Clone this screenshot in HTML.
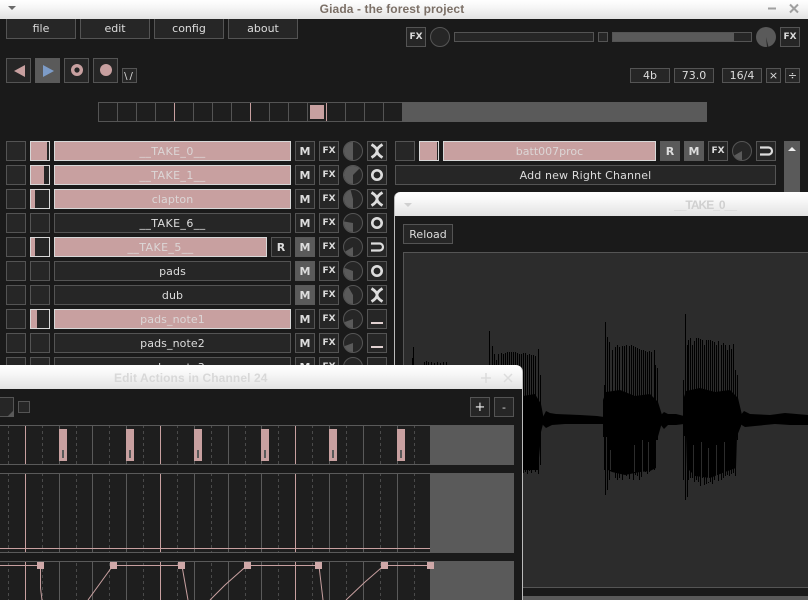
<!DOCTYPE html>
<html lang="en"><head><meta charset="utf-8"><title>Giada - the forest project</title>
<style>
html{margin:0;padding:0;background:#1a1a1a;width:808px;height:600px;overflow:hidden}
body{margin:0;padding:0;background:#1a1a1a;position:relative;width:808px;height:600px;overflow:hidden;font:11px "DejaVu Sans","Liberation Sans",sans-serif;color:#ddd}
div,svg{position:absolute;box-sizing:border-box}
.b{border:1px solid #545454;background:#262626;text-align:center;height:20px;line-height:19px;white-space:nowrap;overflow:hidden}
.r{left:0;width:808px;height:20px}
.c1{left:6px;width:20px}.c2{left:30px;width:20px}.n{left:54px;width:237px;letter-spacing:.1px}
.t{letter-spacing:.4px}
.m{left:295px;width:20px;font-weight:bold;font-size:11px}.fx{left:319px;width:20px;font-weight:bold;font-size:9px}
.k{left:343px;top:0;width:20px;height:20px}.md{left:367px;width:20px}
.md svg{left:0;top:0}
.p{background:#c8a0a0;border-color:#d8d8d8;color:#dcd6d6}
.on{background:#5a5a5a;border-color:#5a5a5a}
.f{left:0;top:0}
.dk{background:#262626;top:0;bottom:0;right:0}
.tb{background:linear-gradient(#fff 0,#f6f6f6 40%,#e2e2e2 100%)}
.ttl{font:bold 12px "Liberation Sans",sans-serif;text-align:center;white-space:nowrap;letter-spacing:.1px}
circle.kc{fill:#262626;stroke:#555}
path.w{fill:#5a5a5a}
</style></head><body>

<svg width="0" height="0" style="left:0;top:0"><defs>
<path id="ix" d="M4.500 3.500Q15.500 10 4.500 16.500M15.500 3.500Q4.500 10 15.500 16.500" fill="none" stroke="#ddd" stroke-width="2.800"/>
<circle id="io" cx="10" cy="10" r="4.700" fill="none" stroke="#ddd" stroke-width="2.600"/>
<path id="iu" d="M4 6.500H12.500A3.500 3.500 0 0 1 12.500 13.500H4" fill="none" stroke="#ddd" stroke-width="2.200"/>
<rect id="il" x="4" y="13" width="12" height="2" fill="#e0d0d0"/>
</defs></svg>

<!-- menu -->
<div class="b" style="left:6px;top:10px;width:70px;height:29px;padding-top:9px;line-height:18px">file</div>
<div class="b" style="left:80px;top:10px;width:70px;height:29px;padding-top:9px;line-height:18px">edit</div>
<div class="b" style="left:154px;top:10px;width:70px;height:29px;padding-top:9px;line-height:18px">config</div>
<div class="b" style="left:228px;top:10px;width:70px;height:29px;padding-top:9px;line-height:18px">about</div>

<!-- main title -->
<div class="tb" style="left:0;top:0;width:808px;height:19px"></div>
<div class="ttl" style="left:0;top:1px;width:784px;color:#7b6f66;line-height:16px">Giada - the forest project</div>
<svg class="f" width="808" height="19"><path d="M8 6H16L12 10Z" fill="#6a6a6a"/><path d="M768 8.500H776" stroke="#a0a0a0" stroke-width="2"/><path d="M790 4.500L798 12.500M798 4.500L790 12.500" stroke="#a0a0a0" stroke-width="2"/></svg>

<!-- transport -->
<div class="b" style="left:6px;top:58px;width:25px;height:25px"></div>
<div class="b on" style="left:35px;top:58px;width:25px;height:25px"></div>
<div class="b" style="left:64px;top:58px;width:25px;height:25px"></div>
<div class="b" style="left:93px;top:58px;width:25px;height:25px"></div>
<div class="b" style="left:122px;top:68px;width:15px;height:15px;line-height:15px;font-size:10px;letter-spacing:2px">\/</div>
<svg class="f" width="130" height="90"><path d="M25 65V77L14 71Z" fill="#c8a0a0"/><path d="M43 65V77L54 71Z" fill="#7d9cc8"/><circle cx="77" cy="70" r="4.300" fill="none" stroke="#c8a0a0" stroke-width="3.400"/><circle cx="106" cy="70" r="6" fill="#c8a0a0"/></svg>

<!-- beat meter -->
<svg class="f" width="808" height="130">
<path d="M98.500 102.500H402.500V121.500H98.500ZM117.500 102V122M136.500 102V122M155.500 102V122M193.500 102V122M212.500 102V122M231.500 102V122M269.500 102V122M288.500 102V122M307.500 102V122M345.500 102V122M364.500 102V122M383.500 102V122" fill="#1e1e1e" stroke="#545454"/>
<path d="M174.500 103V121M250.500 103V121M326.500 103V121" stroke="#c8a0a0"/>
<rect x="310" y="105" width="14" height="14" fill="#c8a0a0"/>
<rect x="402" y="102" width="305" height="20" fill="#5a5a5a"/>
</svg>

<!-- master -->
<div class="b" style="left:406px;top:27px;width:20px;font-weight:bold;font-size:9px">FX</div>
<svg style="left:430px;top:27px" width="20" height="20"><circle class="kc" cx="10" cy="10" r="9.500"/></svg>
<div class="b" style="left:454px;top:32px;width:140px;height:10px"></div>
<div class="b" style="left:598px;top:32px;width:10px;height:10px"></div>
<div class="b" style="left:612px;top:32px;width:140px;height:10px"><div style="left:0;top:0;bottom:0;width:121px;background:#5a5a5a"></div></div>
<svg style="left:756px;top:27px" width="20" height="20"><circle cx="10" cy="10" r="10" fill="#5a5a5a"/><path d="M10 10L11 20H12.500Z" fill="#262626"/></svg>
<div class="b" style="left:780px;top:27px;width:20px;font-weight:bold;font-size:9px">FX</div>

<div class="b" style="left:630px;top:68px;width:40px;height:15px;line-height:14px">4b</div>
<div class="b" style="left:674px;top:68px;width:40px;height:15px;line-height:14px">73.0</div>
<div class="b" style="left:722px;top:68px;width:40px;height:15px;line-height:14px">16/4</div>
<div class="b" style="left:766px;top:68px;width:15px;height:15px;line-height:13px">×</div>
<div class="b" style="left:785px;top:68px;width:15px;height:15px;line-height:13px">÷</div>

<!-- left channels -->
<div class="r" style="top:141px"><div class="b c1"></div><div class="b c2 p"><div class="dk" style="width:2px"></div></div><div class="b n p t">__TAKE_0__</div><div class="b m">M</div><div class="b fx">FX</div>
<svg class="k" style="left:343px"><circle class="kc" cx="10" cy="10" r="9.500"/><path class="w" d="M10 10V19A9 9 0 0 1 10 1Z"/></svg><div class="b md"><svg width="18" height="18" viewBox="1 1 18 18"><use href="#ix"/></svg></div></div>

<div class="r" style="top:165px"><div class="b c1"></div><div class="b c2 p"><div class="dk" style="width:5px"></div></div><div class="b n p t">__TAKE_1__</div><div class="b m">M</div><div class="b fx">FX</div>
<svg class="k" style="left:343px"><circle class="kc" cx="10" cy="10" r="9.500"/><path class="w" d="M10 10V19A9 9 0 1 1 16.360 3.640Z"/></svg><div class="b md"><svg width="18" height="18" viewBox="1 1 18 18"><use href="#io"/></svg></div></div>

<div class="r" style="top:189px"><div class="b c1"></div><div class="b c2 p"><div class="dk" style="left:4px"></div></div><div class="b n p">clapton</div><div class="b m">M</div><div class="b fx">FX</div>
<svg class="k" style="left:343px"><circle class="kc" cx="10" cy="10" r="9.500"/><path class="w" d="M10 10V19A9 9 0 0 1 7.670 1.310Z"/></svg><div class="b md"><svg width="18" height="18" viewBox="1 1 18 18"><use href="#ix"/></svg></div></div>

<div class="r" style="top:213px"><div class="b c1"></div><div class="b c2"></div><div class="b n t">__TAKE_6__</div><div class="b m">M</div><div class="b fx">FX</div>
<svg class="k" style="left:343px"><circle class="kc" cx="10" cy="10" r="9.500"/><path class="w" d="M10 10V19A9 9 0 0 1 1.140 8.440Z"/></svg><div class="b md"><svg width="18" height="18" viewBox="1 1 18 18"><use href="#io"/></svg></div></div>

<div class="r" style="top:237px"><div class="b c1"></div><div class="b c2 p"><div class="dk" style="left:4px"></div></div><div class="b n p t" style="width:213px">__TAKE_5__</div><div class="b m" style="left:271px">R</div><div class="b m on">M</div><div class="b fx">FX</div>
<svg class="k" style="left:343px"><circle class="kc" cx="10" cy="10" r="9.500"/><path class="w" d="M10 10V19A9 9 0 0 1 2.210 14.500Z"/></svg><div class="b md"><svg width="18" height="18" viewBox="1 1 18 18"><use href="#iu"/></svg></div></div>

<div class="r" style="top:261px"><div class="b c1"></div><div class="b c2"></div><div class="b n">pads</div><div class="b m on">M</div><div class="b fx">FX</div>
<svg class="k" style="left:343px"><circle class="kc" cx="10" cy="10" r="9.500"/><path class="w" d="M10 10V19A9 9 0 0 1 1.540 6.920Z"/></svg><div class="b md"><svg width="18" height="18" viewBox="1 1 18 18"><use href="#io"/></svg></div></div>

<div class="r" style="top:285px"><div class="b c1"></div><div class="b c2"></div><div class="b n">dub</div><div class="b m on">M</div><div class="b fx">FX</div>
<svg class="k" style="left:343px"><circle class="kc" cx="10" cy="10" r="9.500"/><path class="w" d="M10 10V19A9 9 0 0 1 5.500 2.210Z"/></svg><div class="b md"><svg width="18" height="18" viewBox="1 1 18 18"><use href="#ix"/></svg></div></div>

<div class="r" style="top:309px"><div class="b c1"></div><div class="b c2 p"><div class="dk" style="left:6px"></div></div><div class="b n p">pads_note1</div><div class="b m">M</div><div class="b fx">FX</div>
<svg class="k" style="left:343px"><circle class="kc" cx="10" cy="10" r="9.500"/><path class="w" d="M10 10V19A9 9 0 0 1 1.540 13.080Z"/></svg><div class="b md"><svg width="18" height="18" viewBox="1 1 18 18"><use href="#il"/></svg></div></div>

<div class="r" style="top:333px"><div class="b c1"></div><div class="b c2"></div><div class="b n">pads_note2</div><div class="b m">M</div><div class="b fx">FX</div>
<svg class="k" style="left:343px"><circle class="kc" cx="10" cy="10" r="9.500"/><path class="w" d="M10 10V19A9 9 0 0 1 1.540 13.080Z"/></svg><div class="b md"><svg width="18" height="18" viewBox="1 1 18 18"><use href="#il"/></svg></div></div>

<div class="r" style="top:357px"><div class="b c1"></div><div class="b c2"></div><div class="b n">pads_note3</div><div class="b m">M</div><div class="b fx">FX</div>
<svg class="k" style="left:343px"><circle class="kc" cx="10" cy="10" r="9.500"/></svg><div class="b md"></div></div>

<!-- right channels -->
<div class="r" style="top:141px"><div class="b" style="left:395px;width:20px"></div><div class="b p" style="left:419px;width:20px"><div class="dk" style="width:1px"></div></div><div class="b p" style="left:443px;width:213px">batt007proc</div><div class="b m on" style="left:660px">R</div><div class="b m on" style="left:684px">M</div><div class="b fx" style="left:708px">FX</div>
<svg class="k" style="left:732px"><circle class="kc" cx="10" cy="10" r="9.500"/><path class="w" d="M10 10V19A9 9 0 0 1 2.210 14.500Z"/></svg><div class="b md" style="left:756px"><svg width="18" height="18" viewBox="1 1 18 18"><use href="#iu"/></svg></div></div>
<div class="b" style="left:395px;top:165px;width:381px;letter-spacing:.15px">Add new Right Channel</div>

<div style="left:784px;top:141px;width:16px;height:60px;background:#5a5a5a"></div>
<svg style="left:784px;top:141px" width="16" height="20"><path d="M4 10L8 6L12 10Z" fill="#eee"/></svg>

<!-- sample editor window -->
<div style="left:394px;top:192px;width:420px;height:408px;background:#1a1a1a;border-left:1px solid #bbb;border-radius:6px 0 0 0"></div>
<div class="tb" style="left:395px;top:192px;width:413px;height:24px;border-radius:5px 0 0 0"></div>
<div class="ttl" style="left:395px;top:198px;width:620px;color:#d0d0d0;line-height:14px;height:18px;letter-spacing:-1px">__TAKE_0__</div>
<svg style="left:395px;top:192px" width="30" height="24"><path d="M9 11H17L13 15Z" fill="#d0d0d0"/></svg>
<div class="b" style="left:403px;top:224px;width:50px;color:#ddd">Reload</div>
<div style="left:403px;top:252px;width:420px;height:336px;background:#2c2c2c;border:1px solid #555"></div>
<div style="left:523px;top:596px;width:285px;height:4px;background:#5a5a5a"></div>

<svg class="f" width="808" height="600">
<g fill="#000">
<path d="M523 396L535 394L541 404L544 420L541 432L540 446L538 470L523 470Z"/>
<path d="M543 417L546 411L550 413L556 414L580 415L597 416L604 417V424L590 424L565 424L552 425L546 428L542 424Z"/>
<path d="M603 400L606 392L620 390L635 396L650 394L658 402L662 415L661 426L657 440L656 468L650 471L640 472L625 475L612 472L608 470L607 437L603 437Z"/>
<path d="M660 416L664 412L668 414L676 414L684 416V424L676 425L668 425L664 429L660 424Z"/>
<path d="M683 400L686 391L700 388L715 392L730 390L738 398L742 415L741 426L737 436L736 468L725 472L710 478L695 476L687 468L686 436L683 436Z"/>
<path d="M740 416L744 411L750 414L770 415L785 413L808 415V425L790 425L775 424L755 426L745 427L740 424Z"/>
</g>
<path fill="none" stroke="#000" stroke-width="1" d="M412.500 358V380M413.500 347V380M424.500 362V380M426.500 361V380M428.500 362V380M431.500 362V380M434.500 363V380M437.500 362V380M440.500 363V380M443.500 362V380M446.500 362V380
M489.500 331V400M492.500 346V400M494.500 354V400M496.500 360V400M498.500 354V400M501.500 353V400M503.500 354V400M505.500 353V400M507.500 352V400M509.500 352V400M511.500 352V400M513.500 352V400M515.500 352V400M517.500 353V400M519.500 354V400M521.500 354V400
M523.500 353V473M525.500 353V472M527.500 355V474M529.500 354V471M531.500 355V473M533.500 355V470M535.500 356V472M538.500 349V474M540.500 375V465
M604.500 385V470M605.500 322V495M607.500 337V490M609.500 342V480M612.500 350V472M615.500 347V478M617.500 345V480M619.500 347V478M622.500 346V480M624.500 346V474M626.500 345V476M629.500 346V479M631.500 345V472M633.500 346V480M635.500 347V475M637.500 348V476M639.500 349V480M641.500 350V477M643.500 350V465M645.500 351V472M647.500 352V474M649.500 351V472M651.500 352V470M654.500 350V470M655.500 365V464M657.500 368V440
M683.500 380V480M685.500 314V500M687.500 345V497M688.500 340V480M690.500 338V478M692.500 345V478M694.500 341V482M696.500 338V480M698.500 338V482M700.500 339V486M702.500 340V478M704.500 345V485M706.500 340V484M708.500 340V483M710.500 340V482M712.500 341V484M714.500 342V480M716.500 345V480M718.500 341V481M721.500 345V480M723.500 343V478M725.500 345V476M727.500 350V475M729.500 345V476M731.500 349V474M733.500 344V473M735.500 370V476M737.500 375V440"/>
<path fill="none" stroke="#2c2c2c" stroke-width="1" d="M634.500 445V472M642.500 440V474M648.500 442V474M656.500 440V470M610.500 450V470M693.500 445V478M701.500 442V480M708.500 448V482M716.500 445V480M724.500 442V476"/>
</svg>

<!-- action editor window -->
<div style="left:-10px;top:365px;width:533px;height:235px;background:#1a1a1a;border-right:1px solid #bbb;border-radius:0 7px 0 0"></div>
<div class="tb" style="left:-10px;top:365px;width:532px;height:24px;border-radius:0 6px 0 0"></div>
<div class="ttl" style="left:114px;top:371px;color:#d8d8d8;line-height:14px">Edit Actions in Channel 24</div>
<svg class="f" width="523" height="400"><path d="M486 373V383M481 378H491" stroke="#dcdcdc" stroke-width="1.500"/><path d="M504 374L512 382M512 374L504 382" stroke="#dcdcdc" stroke-width="1.500"/></svg>

<div class="b" style="left:-6px;top:397px;width:20px"></div>
<svg class="f" width="30" height="420"><path d="M14 410V417H7Z" fill="#5a5a5a"/></svg>
<div class="b" style="left:18px;top:401px;width:12px;height:12px"></div>
<div class="b" style="left:470px;top:397px;width:20px;font-size:13px;color:#eee">+</div>
<div class="b" style="left:494px;top:397px;width:20px;color:#ddd">-</div>

<svg class="f" width="523" height="600">
<rect x="0" y="425" width="430" height="175" fill="#1e1e1e"/>
<rect x="430" y="425" width="84" height="175" fill="#5a5a5a"/>
<path d="M8.500 425V600M42.500 425V600M76.500 425V600M109.500 425V600M143.500 425V600M177.500 425V600M211.500 425V600M245.500 425V600M278.500 425V600M312.500 425V600M346.500 425V600M380.500 425V600M414.500 425V600" stroke="#4a4a4a" stroke-dasharray="3 3"/>
<path d="M59.500 425V600M92.500 425V600M126.500 425V600M194.500 425V600M228.500 425V600M261.500 425V600M329.500 425V600M363.500 425V600M397.500 425V600" stroke="#5a5a5a"/>
<path d="M25.500 425V600M160.500 425V600M295.500 425V600" stroke="#c8a0a0"/>
<rect x="0" y="465" width="514" height="8" fill="#1a1a1a"/>
<rect x="0" y="553" width="514" height="8" fill="#1a1a1a"/>
<path d="M0 425.500H430M0 464.500H430M0 473.500H430M0 552.500H430M0 561.500H430" stroke="#5a5a5a"/>
<g fill="#c8a0a0"><rect x="59" y="429" width="8" height="32"/><rect x="126" y="429" width="8" height="32"/><rect x="194" y="429" width="8" height="32"/><rect x="261" y="429" width="8" height="32"/><rect x="329" y="429" width="8" height="32"/><rect x="397" y="429" width="8" height="32"/></g>
<g fill="#5a5a5a"><rect x="62" y="450" width="2" height="8"/><rect x="129" y="450" width="2" height="8"/><rect x="197" y="450" width="2" height="8"/><rect x="264" y="450" width="2" height="8"/><rect x="332" y="450" width="2" height="8"/><rect x="400" y="450" width="2" height="8"/></g>
<path d="M0 548.500H430" stroke="#c8a0a0"/>
<path d="M0 565.500H40M40.500 565V588L42 600M88 600L113 565.500H181M182 566L188 600M210 600L225 585L247 565.500H318M319 566L323 600M346 600L365 582L384 565.500H430" fill="none" stroke="#c8a0a0"/>
<g fill="#cfa8a8"><rect x="37" y="562" width="7" height="7"/><rect x="110" y="562" width="7" height="7"/><rect x="178" y="562" width="7" height="7"/><rect x="244" y="562" width="7" height="7"/><rect x="315" y="562" width="7" height="7"/><rect x="381" y="562" width="7" height="7"/><rect x="427" y="562" width="7" height="7"/></g>
</svg>
</body></html>
